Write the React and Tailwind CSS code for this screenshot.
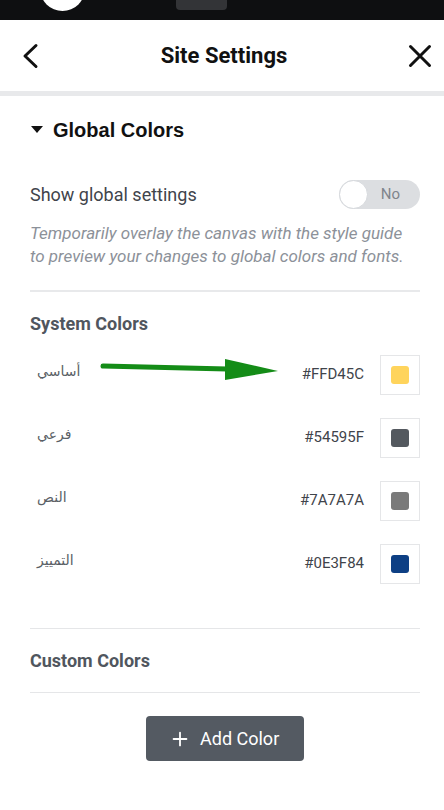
import { Plus } from 'lucide-react';

const systemColors = [
    { name: 'أساسي', hex: '#FFD45C' },
    { name: 'فرعي', hex: '#54595F' },
    { name: 'النص', hex: '#7A7A7A' },
    { name: 'التمييز', hex: '#0E3F84' },
];

function GreenArrow() {
    return (
        <svg width="182" height="24" viewBox="0 0 182 24" className="absolute left-[69px] top-[16px]">
            <path d="M4 7 L128 10" stroke="#148c17" strokeWidth="5" strokeLinecap="round" />
            <path d="M126 0 L179 12 L126 21 Z" fill="#148c17" />
        </svg>
    );
}

export default function App() {
    return (
        <div className="w-[444px] h-[810px] bg-white flex flex-col overflow-hidden" style={{ fontFamily: 'Roboto, "Noto Sans", sans-serif' }}>
            {/* Top bar */}
            <div className="h-[20px] bg-[#0e0f11] relative shrink-0">
                <div className="absolute left-[40px] top-[-34px] w-[45px] h-[45px] rounded-full bg-white" />
                <div className="absolute left-[176px] top-[-6px] w-[51px] h-[16px] rounded-[4px] bg-[#333437]" />
            </div>

            {/* Header */}
            <div className="h-[71px] flex items-center justify-between pl-[22px] pr-[12px] shrink-0">
                <svg width="18" height="26" viewBox="0 0 18 26">
                    <path d="M14 2.5 L3 13 L14 23.5" fill="none" stroke="#111" strokeWidth="3" strokeLinecap="round" strokeLinejoin="round" />
                </svg>
                <h1 className="text-[22px] font-bold text-[#111]">Site Settings</h1>
                <svg width="24" height="24" viewBox="0 0 24 24">
                    <path d="M2.5 2.5 L21.5 21.5 M21.5 2.5 L2.5 21.5" fill="none" stroke="#111" strokeWidth="3" strokeLinecap="round" />
                </svg>
            </div>
            <div className="h-[5px] bg-[#e8e9eb] shrink-0" />

            <div className="pl-[30px] pr-[24px] flex flex-col">
                {/* Global Colors */}
                <div className="flex items-center gap-[9px] mt-[22px] h-[24px]">
                    <svg width="14" height="8" viewBox="0 0 14 8"><path d="M1 0 L13 0 L7 7 Z" fill="#111" /></svg>
                    <h2 className="text-[20px] font-bold text-[#111]" style={{ fontFamily: '"Liberation Sans", Arial, sans-serif' }}>Global Colors</h2>
                </div>

                <div className="flex items-center justify-between mt-[38px]">
                    <span className="text-[18px] text-[#3f444b]">Show global settings</span>
                    <div className="w-[81px] h-[29px] rounded-full bg-[#dcdee1] relative flex items-center justify-end pr-[20px]">
                        <div className="absolute left-0 top-0 w-[29px] h-[29px] rounded-full bg-white border border-[#d5d8dc]" />
                        <span className="text-[15px] text-[#80858c]">No</span>
                    </div>
                </div>

                <p className="mt-[13px] text-[17px] italic leading-[23px] text-[#8c9199]">
                    Temporarily overlay the canvas with the style guide to preview your changes to global colors and fonts.
                </p>

                <div className="h-[2px] bg-[#e8e9eb] mt-[22px]" />

                <h3 className="mt-[18px] text-[18px] leading-[27px] font-bold text-[#50565e]">System Colors</h3>

                <div className="flex flex-col mt-[6px]">
                    {systemColors.map((c, idx) => (
                        <div key={idx} className="h-[63px] flex items-center justify-between relative">
                            <span className="pl-[7px] pb-[6px] text-[14px] text-[#5a5f66]" style={{ fontFamily: '"DejaVu Sans", "Noto Sans", sans-serif' }} dir="rtl">{c.name}</span>
                            {idx === 0 && <GreenArrow />}
                            <div className="flex items-center gap-[16px]">
                                <span className="text-[15px] text-[#3f444b]">{c.hex}</span>
                                <div className="w-[40px] h-[40px] border border-[#e5e6e8] flex items-center justify-center">
                                    <div className="w-[18px] h-[18px] rounded-[3px]" style={{ backgroundColor: c.hex }} />
                                </div>
                            </div>
                        </div>
                    ))}
                </div>

                <div className="h-[1px] bg-[#e5e6e8] mt-[33px]" />
                <h3 className="h-[63px] flex items-center text-[18px] font-bold text-[#50565e]">Custom Colors</h3>
                <div className="h-[1px] bg-[#e5e6e8]" />

                <div className="flex justify-center mt-[23px]">
                    <button className="w-[158px] h-[45px] rounded-[4px] bg-[#545a62] text-white flex items-center pl-[23px] gap-[9px] text-[18px]">
                        <Plus size={22} strokeWidth={2} />
                        Add Color
                    </button>
                </div>
            </div>
        </div>
    );
}
